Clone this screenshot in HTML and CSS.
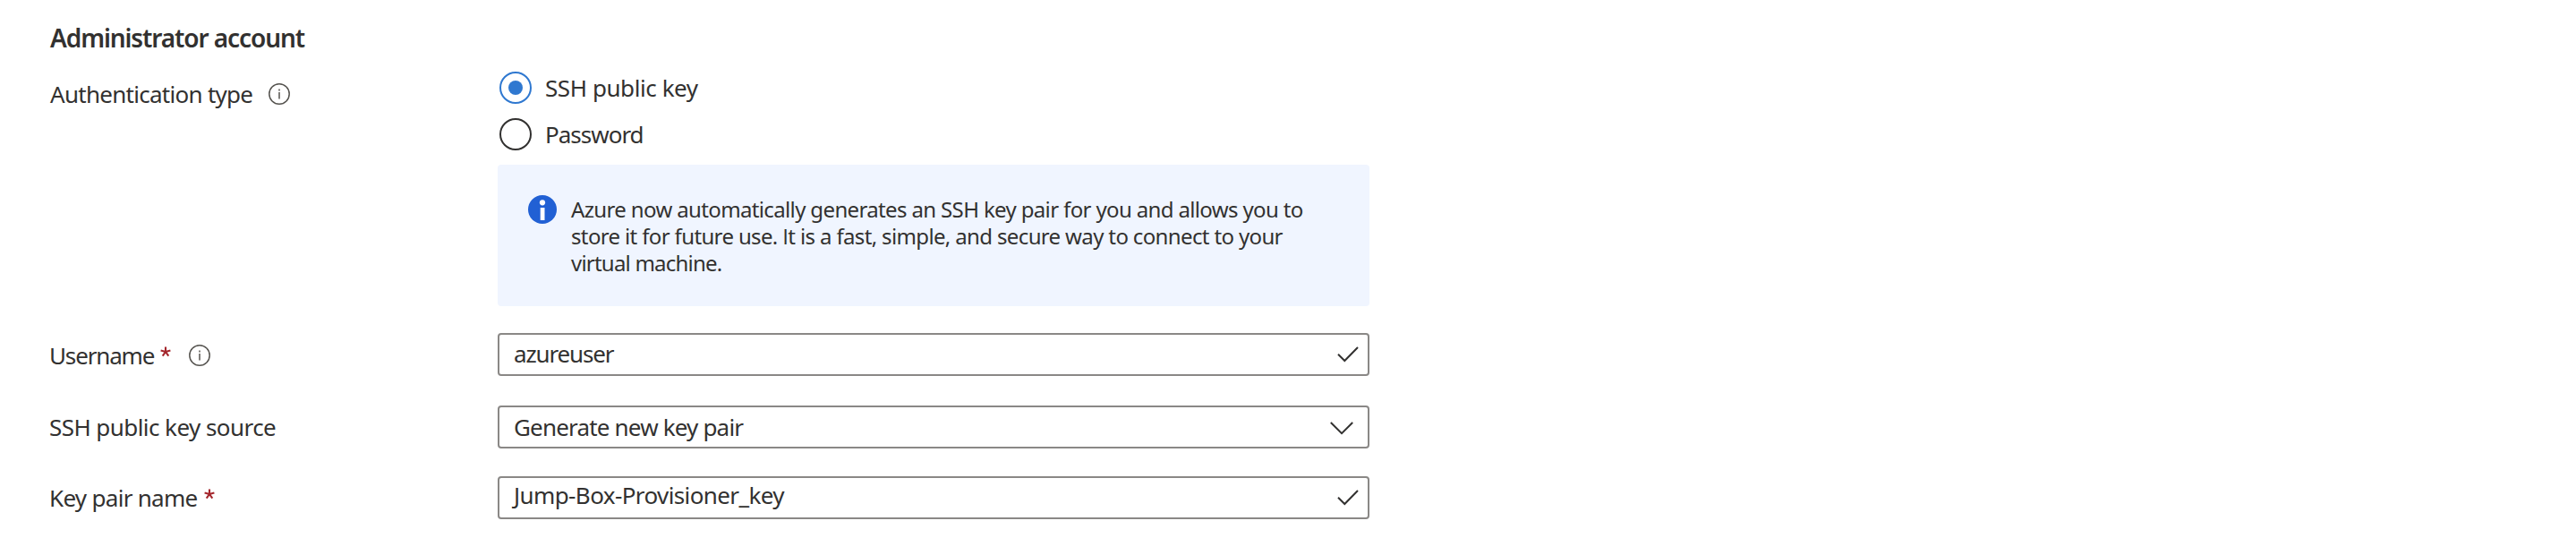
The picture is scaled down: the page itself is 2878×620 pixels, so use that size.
FILE: index.html
```html
<!DOCTYPE html>
<html lang="en">
<head>
<meta charset="utf-8">
<title>Administrator account</title>
<link rel="stylesheet" href="styles.css">
</head>
<body>
<main class="form">
  <h2 class="title">Administrator account</h2>

  <section class="row row-auth">
    <div class="label label-auth">
      <span class="text-auth">Authentication type</span>
      <svg class="hint" viewBox="0 0 24 24"><circle cx="12" cy="12" r="11.2"/><path d="M12 10v7.5M12 6.6v1.8"/></svg>
    </div>
    <div class="field">
      <div class="radios">
        <div class="radio"><span class="ring ring-on"></span><span class="text-ssh">SSH public key</span></div>
        <div class="radio"><span class="ring"></span><span class="text-password">Password</span></div>
      </div>
      <div class="info">
        <svg class="info-icon" viewBox="0 0 32 32"><circle cx="16" cy="16" r="16" fill="#2160d4"/><circle cx="16" cy="8.3" r="3.1" fill="#fff"/><path d="M13.7 14h4.8v14h-4.8z" fill="#fff"/></svg>
        <p class="info-text">
          <span class="line-1">Azure now automatically generates an SSH key pair for you and allows you to</span><br>
          <span class="line-2">store it for future use. <span class="plain-cap">I</span>t is a fast, simple, and secure way to connect to your</span><br>
          <span class="line-3">virtual machine.</span>
        </p>
      </div>
    </div>
  </section>

  <section class="row row-username">
    <div class="label label-username">
      <span class="text-username">Username</span>
      <svg class="star" viewBox="0 0 12 12"><path d="M6 6V.4M6 6L.6 4.4M6 6l5.4-1.6M6 6l-3.3 4.6M6 6l3.3 4.6"/></svg>
      <svg class="hint" viewBox="0 0 24 24"><circle cx="12" cy="12" r="11.2"/><path d="M12 10v7.5M12 6.6v1.8"/></svg>
    </div>
    <div class="input input-username">
      <span class="value-username">azureuser</span>
      <svg class="check" viewBox="0 0 24 18"><path d="M1 8.8l7.3 7.2L23 1"/></svg>
    </div>
  </section>

  <section class="row row-source">
    <div class="label"><span class="text-source">SSH public key source</span></div>
    <div class="input">
      <span class="value-source">Generate new key pair</span>
      <svg class="chevron" viewBox="0 0 26 15"><path d="M.8 1L13 13.2 25.2 1"/></svg>
    </div>
  </section>

  <section class="row row-key">
    <div class="label">
      <span class="text-key">Key pair name</span>
      <svg class="star" viewBox="0 0 12 12"><path d="M6 6V.4M6 6L.6 4.4M6 6l5.4-1.6M6 6l-3.3 4.6M6 6l3.3 4.6"/></svg>
    </div>
    <div class="input input-key">
      <span class="value-key">Jump-Box-Provisioner_key</span>
      <svg class="check" viewBox="0 0 24 18"><path d="M1 8.8l7.3 7.2L23 1"/></svg>
    </div>
  </section>
</main>
</body>
</html>
```
FILE: styles.css
```css
* { box-sizing: border-box; }

body {
  margin: 0;
  background: #fff;
  color: #323130;
  font: 26px/48px "Noto Sans", "Open Sans", sans-serif;
}

svg { display: block; flex: none; fill: none; }
span { white-space: nowrap; }

.form { padding: 24px 0 0 56px; }

.title {
  margin: 0 0 20px;
  font-size: 28px;
  font-weight: 600;
  line-height: 36px;
  letter-spacing: -1.1px;
}

.row { display: grid; grid-template-columns: 500px 974px; }
.row-username { margin-top: 30px; }
.row-source { margin-top: 32px; }
.row-key { margin-top: 31px; }

/* Labels */
.label { display: flex; align-items: flex-start; margin-left: -1px; }
.label-auth { padding-top: 7px; line-height: 36px; margin-left: 0; }
.label-username { padding-top: 1px; }
.hint { width: 24px; height: 24px; stroke: #55534f; stroke-width: 1.5; }
.label-auth .hint { margin: 6px 0 0 18px; }
.label-username .hint { margin: 12px 0 0 20px; }
.star { width: 12px; height: 12px; margin: 14px 0 0 7px; stroke: #a4262c; stroke-width: 2.1; }

.text-auth { letter-spacing: -0.72px; }
.text-username { letter-spacing: -1.15px; }
.text-source { letter-spacing: -0.56px; }
.text-key { letter-spacing: -0.7px; }

/* Radio group */
.radios { display: grid; gap: 16px; }
.radio { display: flex; gap: 15px; padding-left: 2px; line-height: 36px; }
.radio .ring {
  display: grid;
  place-items: center;
  width: 36px;
  height: 36px;
  border: 2px solid #323130;
  border-radius: 50%;
}
.radio .ring-on { border-color: #2f78d0; }
.ring-on::before {
  content: "";
  width: 16px;
  height: 16px;
  border-radius: 50%;
  background: #2f78d0;
}
.text-ssh { letter-spacing: -0.42px; }
.text-password { letter-spacing: -1px; }

/* Information box */
.info {
  display: flex;
  gap: 16px;
  height: 158px;
  margin-top: 16px;
  padding: 34px;
  border-radius: 4px;
  background: #f0f5ff;
}
.info-icon { width: 32px; height: 32px; }
.info-text { margin: 1px 0 0; font-size: 24px; line-height: 30px; }
.line-1 { letter-spacing: -0.64px; }
.line-2 { letter-spacing: -0.64px; }
.line-3 { letter-spacing: -0.78px; }
.plain-cap { font-family: "Open Sans", sans-serif; }

/* Inputs */
.input {
  display: flex;
  justify-content: space-between;
  align-items: flex-start;
  height: 48px;
  padding: 0 10px 0 16px;
  border: 2px solid #8a8886;
  border-radius: 4px;
  line-height: 44px;
}
.input-username { line-height: 42px; }
.input-key { line-height: 38px; }
.check { width: 24px; height: 18px; margin-top: 13px; stroke: #323130; stroke-width: 2; }
.chevron { width: 26px; height: 15px; margin: 16px 6px 0 0; stroke: #323130; stroke-width: 2; }
.value-username { letter-spacing: -1.15px; }
.value-source { letter-spacing: -0.82px; }
.value-key { letter-spacing: -0.6px; }
```
